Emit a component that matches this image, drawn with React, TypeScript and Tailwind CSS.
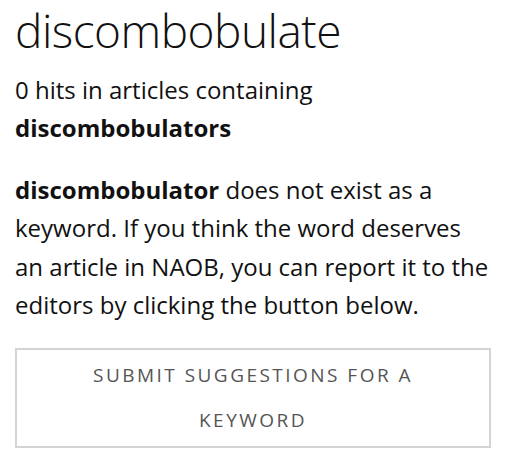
import React from "react";

export default function App() {
  return (
    <div
      className="min-h-screen bg-white px-[15px] pt-0 text-[#111]"
      style={{ fontFamily: '"Open Sans", sans-serif' }}
    >
      <h1 className="text-[46px] font-light leading-[60px] tracking-[-0.5px]">discombobulate</h1>
      <p className="mt-[11px] text-[24px] leading-[1.6]">
        0 hits in articles containing <strong className="font-bold">discombobulators</strong>
      </p>
      <p className="mt-[23px] text-[24px] leading-[1.6]">
        <strong className="font-bold">discombobulator</strong> does not exist as a keyword. If you
        think the word deserves an article in NAOB, you can report it to the editors by clicking
        the button below.
      </p>
      <button
        type="button"
        className="mt-[24px] w-full border-2 border-[#d4d4d4] bg-white px-[44px] py-[3px] text-[19px] uppercase leading-[45px] tracking-[0.13em] text-[#555]"
      >
        Submit suggestions for a keyword
      </button>
    </div>
  );
}
